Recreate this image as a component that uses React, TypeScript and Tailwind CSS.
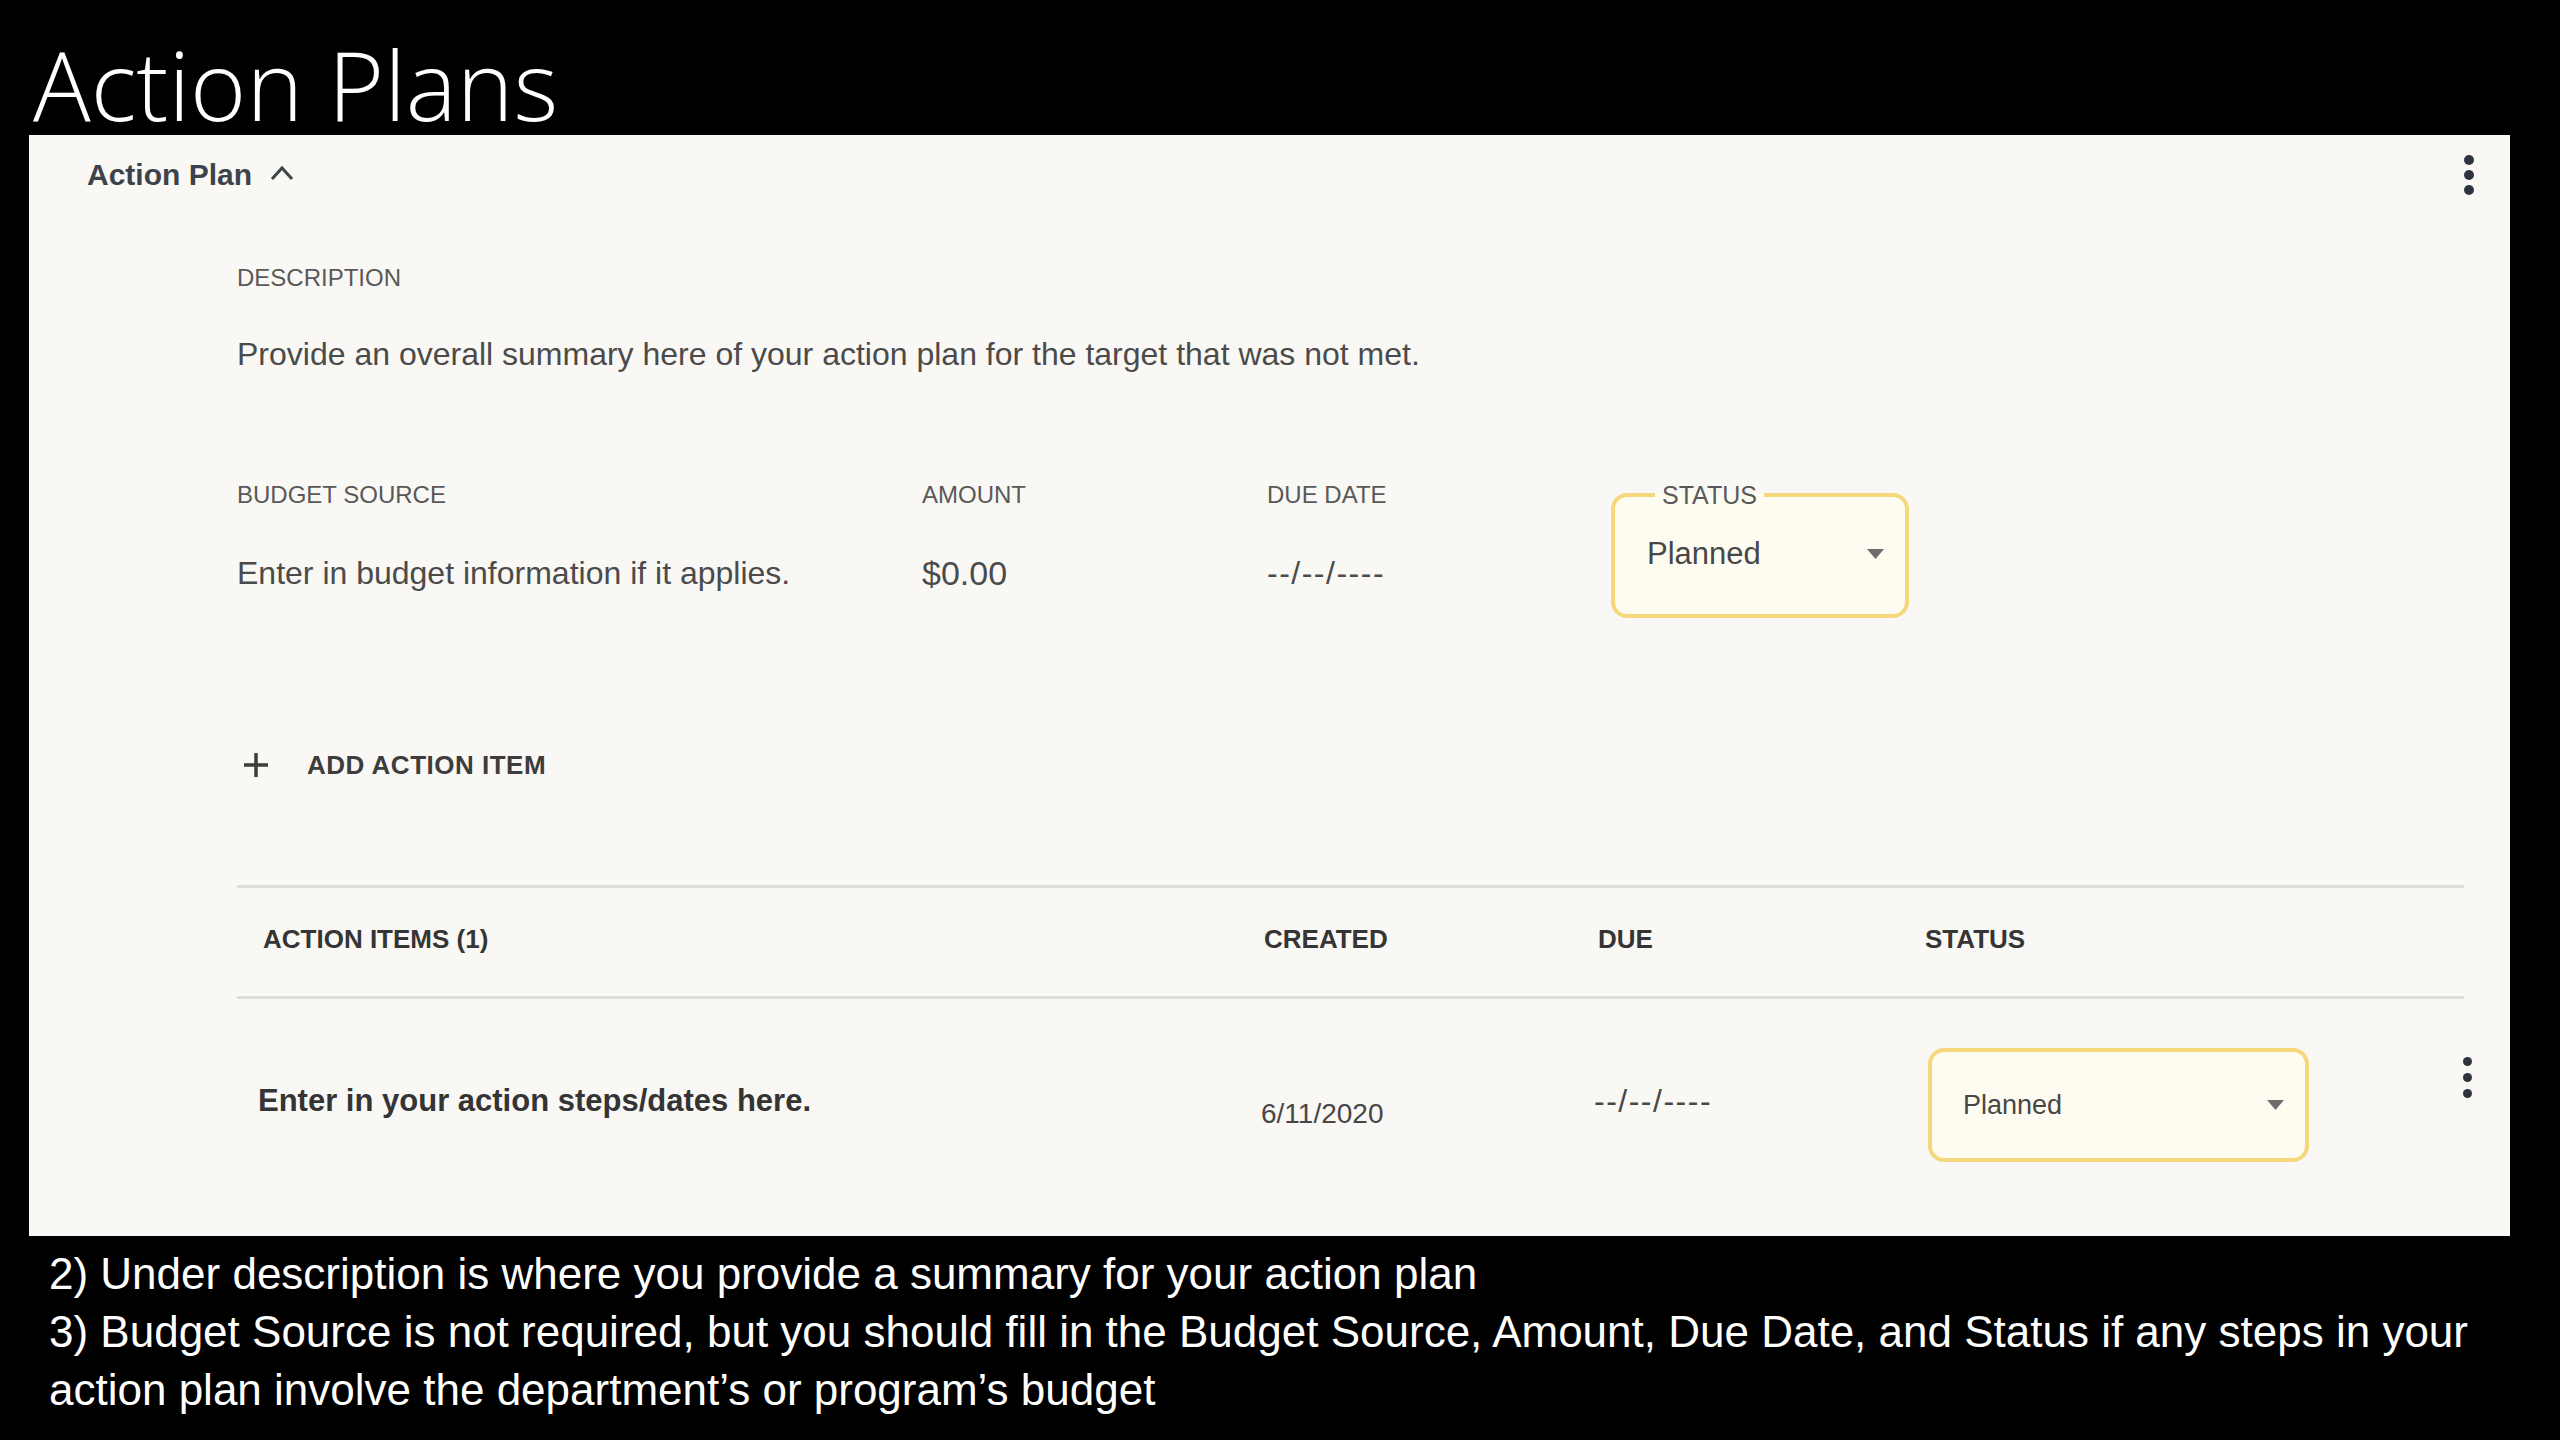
import React from "react";

const sans = "font-['Liberation_Sans',Arial,sans-serif]";

function Kebab({ dot, gap, className }: { dot: string; gap: string; className?: string }) {
  return (
    <div className={`flex flex-col items-center ${gap} ${className ?? ""}`}>
      <span className={`${dot} rounded-full bg-[#2d3440]`} />
      <span className={`${dot} rounded-full bg-[#2d3440]`} />
      <span className={`${dot} rounded-full bg-[#2d3440]`} />
    </div>
  );
}

function Caret() {
  return (
    <svg width="17" height="10" viewBox="0 0 17 10">
      <polygon points="0,0 17,0 8.5,10" fill="#6d6d6d" />
    </svg>
  );
}

export default function App() {
  return (
    <div className="w-[2560px] h-[1440px] bg-black flex flex-col overflow-hidden">
      {/* slide title */}
      <div className="h-[135px] pl-[33px] pt-[35px]">
        <h1 className="font-['Open_Sans',sans-serif] font-light text-[96px] leading-[98px] text-white">
          Action Plans
        </h1>
      </div>

      {/* action plan panel */}
      <div className={`ml-[29px] w-[2481px] h-[1101px] bg-[#f9f8f4] flex flex-col ${sans}`}>
        <div className="h-[80px] flex items-center justify-between pl-[58px] pr-[36px]">
          <div className="flex items-center gap-[18px]">
            <span className="text-[30px] leading-[40px] font-bold text-[#3c434b]">Action Plan</span>
            <svg width="24" height="16" viewBox="0 0 24 16" className="mb-[4px]">
              <polyline points="2,14 12,3 22,14" fill="none" stroke="#3c434b" strokeWidth="3" />
            </svg>
          </div>
          <Kebab dot="w-[10px] h-[10px]" gap="gap-[5px]" />
        </div>

        <div className="pl-[208px] pr-[46px] flex flex-col">
          <div className="mt-[45px] text-[24px] leading-[36px] text-[#595959]">DESCRIPTION</div>
          <div className="mt-[40px] text-[32px] leading-[36px] text-[#4b4b4b]">
            Provide an overall summary here of your action plan for the target that was not met.
          </div>

          <div className="mt-[105px] grid grid-cols-[685px_345px_344px_298px]">
            <div className="flex flex-col">
              <div className="text-[24px] leading-[36px] text-[#595959]">BUDGET SOURCE</div>
              <div className="mt-[42px] text-[32px] leading-[36px] text-[#4b4b4b]">
                Enter in budget information if it applies.
              </div>
            </div>
            <div className="flex flex-col">
              <div className="text-[24px] leading-[36px] text-[#595959]">AMOUNT</div>
              <div className="mt-[42px] text-[34px] leading-[36px] text-[#4b4b4b]">$0.00</div>
            </div>
            <div className="flex flex-col">
              <div className="text-[24px] leading-[36px] text-[#595959]">DUE DATE</div>
              <div className="mt-[42px] text-[32px] leading-[36px] tracking-[1.5px] text-[#4b4b4b]">--/--/----</div>
            </div>
            <fieldset className="mt-[3px] border-[4px] border-[#f5d77c] rounded-[16px] bg-[#fefcf0]">
              <legend className="ml-[40px] px-[7px] text-[25px] leading-[30px] text-[#595959]">STATUS</legend>
              <div className="h-[104px] pb-[16px] pl-[32px] pr-[21px] flex items-center justify-between">
                <span className="text-[31px] leading-[40px] text-[#474747]">Planned</span>
                <Caret />
              </div>
            </fieldset>
          </div>

          <div className="mt-[127px] h-[40px] flex items-center">
            <svg width="26" height="26" viewBox="0 0 26 26" className="ml-[6px]">
              <path d="M13 1v24M1 13h24" stroke="#3d3d3d" strokeWidth="3.5" />
            </svg>
            <span className="ml-[38px] text-[26px] leading-[36px] font-bold tracking-[0.5px] text-[#3d3d3d]">
              ADD ACTION ITEM
            </span>
          </div>

          <div className="mt-[100px] h-[3px] bg-[#dedcd8]" />
          <div className="h-[108px] pb-[6px] grid grid-cols-[1024px_333px_331px_1fr] items-center text-[26px] leading-[36px] font-bold text-[#353535]">
            <div className="pl-[26px]">ACTION ITEMS (1)</div>
            <div className="pl-[3px]">CREATED</div>
            <div className="pl-[4px]">DUE</div>
            <div>STATUS</div>
          </div>
          <div className="h-[3px] bg-[#dedcd8]" />

          <div className="h-[212px] grid grid-cols-[1024px_333px_331px_1fr] items-center">
            <div className="pl-[21px] mb-[8px] text-[31px] leading-[40px] font-bold text-[#343434]">
              Enter in your action steps/dates here.
            </div>
            <div className="mt-[18px] text-[28px] leading-[36px] text-[#474747]">6/11/2020</div>
            <div className="mb-[8px] text-[32px] leading-[36px] tracking-[1.5px] text-[#474747]">--/--/----</div>
            <div className="flex items-center justify-between">
              <div className="ml-[3px] w-[381px] h-[114px] border-[4px] border-[#f5d77c] rounded-[16px] bg-[#fefcf0] pl-[31px] pr-[21px] flex items-center justify-between">
                <span className="text-[27px] leading-[36px] text-[#474747]">Planned</span>
                <Caret />
              </div>
              <Kebab dot="w-[9px] h-[9px]" gap="gap-[7px]" className="-mr-[8px] mb-[56px]" />
            </div>
          </div>
        </div>
      </div>

      {/* slide notes */}
      <div className={`mt-[9px] pl-[49px] text-[44px] leading-[58px] text-white whitespace-nowrap ${sans}`}>
        <div>2) Under description is where you provide a summary for your action plan</div>
        <div>
          3) Budget Source is not required, but you should fill in the Budget Source, Amount, Due Date, and Status if any steps in your
          <br />
          action plan involve the department’s or program’s budget
        </div>
      </div>
    </div>
  );
}
